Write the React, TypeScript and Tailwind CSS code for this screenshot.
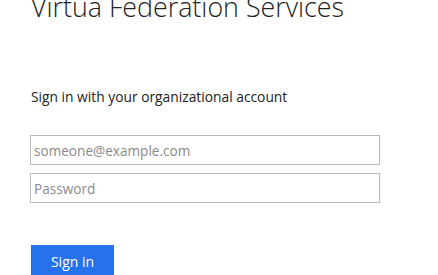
export default function App() {
  return (
    <div className="h-[275px] w-[438px] overflow-hidden bg-white pl-[30px] font-['Open_Sans',sans-serif]">
      <h1 className="ml-px mt-[-10px] text-[26.8px] font-light leading-[34px] text-[#222]">
        Virtua Federation Services
      </h1>

      <p className="ml-px mt-[64px] text-[13.8px] leading-[18px] text-[#222]">
        Sign in with your organizational account
      </p>

      <div className="mt-[29px] flex flex-col gap-[8px]">
        <input
          type="email"
          placeholder="someone@example.com"
          className="h-[30px] w-[350px] border border-[#bababa] px-[3px] text-[13.6px] text-[#222] outline-none placeholder:text-[#8a8a8a]"
        />
        <input
          type="password"
          placeholder="Password"
          className="h-[30px] w-[350px] border border-[#bababa] px-[3px] text-[13.6px] text-[#222] outline-none placeholder:text-[#8a8a8a]"
        />
      </div>

      <button className="ml-px mt-[42px] h-[32px] w-[83px] bg-[#2672ec] text-[14px] text-white">
        Sign in
      </button>
    </div>
  );
}
